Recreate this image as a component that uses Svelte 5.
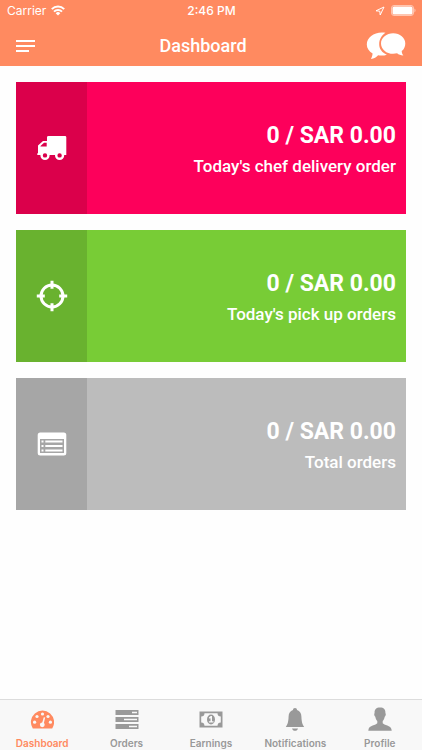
<script lang="ts">
	type Card = {
		id: string;
		label: string;
		count: number;
		amount: number;
	};

	const cards: Card[] = [
		{ id: 'delivery', label: "Today's chef delivery order", count: 0, amount: 0 },
		{ id: 'pickup', label: "Today's pick up orders", count: 0, amount: 0 },
		{ id: 'total', label: 'Total orders', count: 0, amount: 0 }
	];

	const tabs = ['Dashboard', 'Orders', 'Earnings', 'Notifications', 'Profile'];

	let activeTab = $state('Dashboard');
</script>

<div class="app">
	<header>
		<div class="status-bar">
			<div class="carrier">
				<span>Carrier</span>
				<svg width="14" height="11" viewBox="0 0 14 11" fill="none" stroke="#fff" stroke-width="2">
					<path d="M.8 4.1a8.8 8.8 0 0 1 12.4 0" />
					<path d="M3 6.6a5.7 5.7 0 0 1 8 0" />
					<path d="M7 10.6 4.7 8.2a3.3 3.3 0 0 1 4.6 0z" fill="#fff" stroke="none" />
				</svg>
			</div>
			<time>2:46 PM</time>
			<div class="battery">
				<svg width="10" height="10" viewBox="0 0 10 10" fill="none" stroke="#fff">
					<path d="M9 1 1 4.8l3.8.4L5.2 9z" stroke-linejoin="round" />
				</svg>
				<svg width="25" height="11" viewBox="0 0 25 11" fill="#fff">
					<rect x=".5" y=".5" width="22" height="10" rx="2.5" fill="none" stroke="#fff" stroke-opacity=".5" />
					<rect x="1.5" y="1.5" width="20" height="8" rx="1.5" />
					<path d="M23.5 3.6c1.3.6 1.3 3.2 0 3.8z" opacity=".6" />
				</svg>
			</div>
		</div>
		<nav class="nav-bar">
			<button class="menu" aria-label="Menu">
				<svg width="19" height="14" viewBox="0 0 19 14" fill="#fff">
					<path d="M0 1h19v2H0zM0 6h19v2H0zM0 11h13v2H0z" />
				</svg>
			</button>
			<h1>Dashboard</h1>
			<button class="chat" aria-label="Messages">
				<svg width="40" height="28" viewBox="0 0 40 28" fill="#fff">
					<path
						d="M19.500.8C9.500-1 .8 5 .8 12.500c0 3.800 2.200 6.800 5.800 8.900-.2 2.200-.8 4-1.700 5.500 3.200-.3 5.700-1.700 7.200-3.600 3.100.5 6.100.3 8.800-.6C15.800 20.400 13.200 16.800 13.200 12.200c0-4.700 2.300-8.900 6.300-11.400z"
					/>
					<path
						d="M27.200 1.200c-6.600 0-12.200 4.400-12.200 10.200s5.400 10.400 12.200 10.400c1.400 0 2.700-.2 3.900-.5 1.500 1.300 3.600 2.100 6.300 2.200-1.100-1.300-1.600-2.600-1.700-4.400 2.300-1.800 3.600-4.600 3.600-7.700 0-5.800-5.400-10.200-12.100-10.200z"
					/>
				</svg>
			</button>
		</nav>
	</header>

	<main>
		{#each cards as card (card.id)}
			<section class="card {card.id}">
				<div class="card-icon">
					{#if card.id === 'delivery'}
						<svg width="30" height="26" viewBox="0 0 30 26">
							<path
								d="M11.500 1H28q1.300 0 1.300 1.300V20H.3v-1.700H1v-7.800L6 6h4V2.300Q10 1 11.500 1z"
								fill="#fff"
							/>
							<path d="M3.500 11.500V11L7 7.800h2.700v3.700z" fill="#db004b" />
							<circle cx="8" cy="20.400" r="3.400" fill="#db004b" stroke="#fff" stroke-width="2.400" />
							<circle cx="22.600" cy="20.400" r="3.400" fill="#db004b" stroke="#fff" stroke-width="2.400" />
						</svg>
					{:else if card.id === 'pickup'}
						<svg width="32" height="32" viewBox="0 0 32 32" fill="none" stroke="#fff" stroke-width="3">
							<circle cx="16" cy="16" r="11" />
							<path d="M16 .8v8M16 23.200v8M.8 16h8M23.200 16h8" />
						</svg>
					{:else}
						<svg width="30" height="24" viewBox="0 0 30 24">
							<rect x=".7" y=".5" width="28.600" height="23" rx="2.500" fill="#fff" />
							<path
								d="M3 7h24v14H3z M4.500 8.500v2h2v-2z M8.300 8.500v2h17.200v-2z M4.500 13v2h2v-2z M8.300 13v2h17.200v-2z M4.500 17.500v2h2v-2z M8.300 17.500v2h17.200v-2z"
								fill="#a6a6a6"
								fill-rule="evenodd"
							/>
						</svg>
					{/if}
				</div>
				<div class="card-text">
					<h2>{card.count} / SAR {card.amount.toFixed(2)}</h2>
					<p>{card.label}</p>
				</div>
			</section>
		{/each}
	</main>

	<nav class="tab-bar">
		{#each tabs as tab}
			<button class:active={activeTab === tab} onclick={() => (activeTab = tab)}>
				<svg width="24" height="24" viewBox="0 0 24 24" fill="currentColor">
					{#if tab === 'Dashboard'}
						<path d="M2.800 21.500A11.600 11.600 0 1 1 22.200 21.500z" />
						<g fill="#f8f8f8">
							<circle cx="4.600" cy="15.200" r="1.600" />
							<circle cx="7" cy="9.500" r="1.600" />
							<circle cx="12.500" cy="7" r="1.600" />
							<circle cx="18" cy="9.500" r="1.600" />
							<circle cx="20.400" cy="15.200" r="1.600" />
							<circle cx="12.300" cy="17.800" r="2.400" />
							<path d="m11.800 17 2-6.800 1.400.4-1.700 6.800z" />
						</g>
					{:else if tab === 'Orders'}
						<path
							fill-rule="evenodd"
							d="M.5 3h23v5H.5z M17 4.700v1.600h5V4.700z M.5 10h23v5H.5z M9 11.700v1.600h13v-1.600z M.5 17h23v5H.5z M14 18.700v1.600h8v-1.600z"
						/>
					{:else if tab === 'Earnings'}
						<path
							fill-rule="evenodd"
							d="M.5 4.500h23v16H.5z M5.500 6.200A3.400 3.400 0 0 1 2.200 9.500v6a3.400 3.400 0 0 1 3.300 3.300h13a3.400 3.400 0 0 1 3.300-3.300v-6a3.400 3.400 0 0 1-3.300-3.300z"
						/>
						<ellipse cx="12" cy="12.500" rx="4" ry="5" />
						<path d="M9.900 10.500 11.700 9h1.300v5.200h1.500v1.300H9.900v-1.300h1.600v-3l-.9.600z" fill="#f8f8f8" />
					{:else if tab === 'Notifications'}
						<path
							d="M12 1c1.300 0 2 .8 2 2 3 1 4.300 3.300 4.400 6.500.2 5.500 1 8 2.800 10.500H2.800C4.600 17.500 5.400 15 5.600 9.500 5.700 6.300 7 4 10 3c0-1.200.7-2 2-2z"
						/>
						<path d="M9 21.500h6c-.5 1.500-1.500 2.300-3 2.300s-2.500-.8-3-2.300z" />
					{:else}
						<path
							d="M12 .5c3.800 0 5.700 2 5.400 5.500.8 1 .3 3-.7 3.800-.3 2-1 3.200-2 4.200v2.300c1.200 1.800 8.300 2.200 8.800 6.200l.2 1.200H.3l.2-1.200c.5-4 7.600-4.400 8.800-6.200V14c-1-1-1.700-2.200-2-4.200-1-.8-1.500-2.800-.7-3.800C6.300 2.500 8.200.5 12 .5z"
						/>
					{/if}
				</svg>
				<span>{tab}</span>
			</button>
		{/each}
	</nav>
</div>

<style>
	:global(body) {
		margin: 0;
		background: #fefefe;
	}

	.app {
		display: flex;
		flex-direction: column;
		min-height: 100vh;
		font-family: Roboto, 'Liberation Sans', sans-serif;
	}

	button {
		padding: 0;
		border: 0;
		background: none;
		font: inherit;
		cursor: pointer;
	}

	svg {
		display: block;
	}

	header {
		background: #ff8a60;
		color: #fff;
	}

	.status-bar {
		display: grid;
		grid-template-columns: 1fr auto 1fr;
		align-items: center;
		height: 20px;
		padding: 1px 6px 0 7px;
		box-sizing: border-box;
		font-family: Inter, 'Liberation Sans', sans-serif;
		font-size: 12px;
		line-height: 16px;
	}

	.carrier {
		display: flex;
		align-items: center;
		gap: 5px;
	}

	.status-bar time {
		font-weight: 500;
	}

	.battery {
		display: flex;
		align-items: center;
		justify-content: flex-end;
		gap: 6px;
	}

	.nav-bar {
		display: flex;
		align-items: center;
		justify-content: space-between;
		height: 46px;
		padding: 6px 16px 0;
		box-sizing: border-box;
	}

	.menu {
		width: 24px;
		padding: 4px 0;
	}

	h1 {
		margin: 0;
		font-size: 18px;
		font-weight: 500;
		line-height: 24px;
	}

	main {
		flex: 1;
		display: flex;
		flex-direction: column;
		gap: 16px;
		padding: 16px;
	}

	.card {
		display: flex;
		min-height: 132px;
		color: #fff;
	}

	.card-icon {
		display: flex;
		align-items: center;
		justify-content: center;
		width: 71px;
	}

	.card-text {
		flex: 1;
		display: flex;
		flex-direction: column;
		justify-content: center;
		gap: 4px;
		padding: 4px 10px 0;
		text-align: right;
	}

	.card h2 {
		margin: 0;
		font-size: 23px;
		font-weight: 700;
		line-height: 28px;
	}

	.card p {
		margin: 0;
		font-size: 17px;
		font-weight: 500;
		line-height: 24px;
	}

	.delivery {
		background: #fd005b;
	}

	.delivery .card-icon {
		background: #db004b;
	}

	.pickup {
		background: #78cc36;
	}

	.pickup .card-icon {
		background: #69b22f;
	}

	.total {
		background: #bcbcbc;
	}

	.total .card-icon {
		background: #a6a6a6;
	}

	.tab-bar {
		display: grid;
		grid-template-columns: repeat(5, 1fr);
		border-top: 1px solid #dcdcdc;
		background: #f8f8f8;
	}

	.tab-bar button {
		display: flex;
		flex-direction: column;
		align-items: center;
		gap: 5px;
		padding: 7px 0 0;
		color: #999;
		font-family: Inter, 'Liberation Sans', sans-serif;
		font-size: 10px;
		font-weight: 600;
		line-height: 14px;
	}

	.tab-bar .active {
		color: #ff8a60;
	}
</style>
